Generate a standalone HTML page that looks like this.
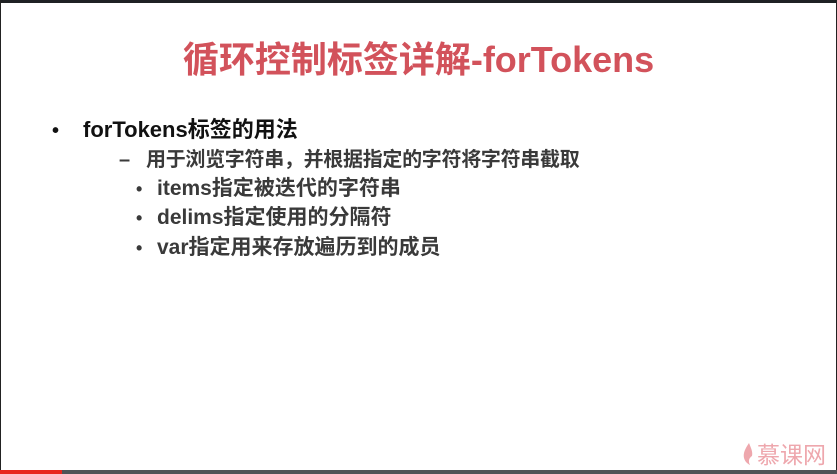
<!DOCTYPE html>
<html><head><meta charset="utf-8"><style>
html,body{margin:0;padding:0}
body{width:837px;height:474px;position:relative;overflow:hidden;background:#fff;font-family:"Liberation Sans","Noto Sans CJK SC",sans-serif;font-weight:bold}
.top{position:absolute;left:0;top:0;width:837px;height:3px;background:#1f2124}
.l{position:absolute;left:0;top:0;width:1px;height:474px;background:#222}
.r{position:absolute;right:0;top:0;width:1px;height:474px;background:#222}
.bot{position:absolute;left:0;top:470px;width:837px;height:4px;background:#4f5357}
.red{position:absolute;left:0;top:470px;width:62px;height:4px;background:#e8251d}
.t{position:absolute;left:0;width:837px;top:37px;text-align:center;font-size:36px;color:#d2525b;line-height:46px}
.x{position:absolute;white-space:nowrap;line-height:26px}
</style></head><body>
<div class="top"></div><div class="l"></div><div class="r"></div>
<div class="t">循环控制标签详解-forTokens</div>
<div class="x" style="left:52px;top:118px;font-size:20px;color:#111">•</div>
<div class="x" style="left:83px;top:117px;font-size:22px;color:#111">forTokens标签的用法</div>
<div class="x" style="left:119px;top:147px;font-size:20px;color:#3a3a3a">–</div>
<div class="x" style="left:146px;top:147px;font-size:20px;color:#3a3a3a;letter-spacing:-0.3px">用于浏览字符串，并根据指定的字符将字符串截取</div>
<div class="x" style="left:136px;top:176px;font-size:18px;color:#3a3a3a">•</div>
<div class="x" style="left:157px;top:176px;font-size:21px;color:#3a3a3a">items指定被迭代的字符串</div>
<div class="x" style="left:136px;top:205px;font-size:18px;color:#3a3a3a">•</div>
<div class="x" style="left:157px;top:205px;font-size:21px;color:#3a3a3a">delims指定使用的分隔符</div>
<div class="x" style="left:136px;top:235px;font-size:18px;color:#3a3a3a">•</div>
<div class="x" style="left:157px;top:235px;font-size:21px;color:#3a3a3a">var指定用来存放遍历到的成员</div>
<svg style="position:absolute;left:743px;top:442px" width="12" height="24" viewBox="0 0 12 22"><path d="M6 0 C2 6 0 10 1 15 C2 19 5 21 7 22 C5 18 6 15 9 13 C10 9 8 5 6 0Z" fill="#eea7ad"/></svg>
<div class="x" style="left:757px;top:443px;font-size:23px;font-weight:normal;color:#eea7ad;line-height:24px">慕课网</div>
<div class="bot"></div><div class="red"></div>
</body></html>
